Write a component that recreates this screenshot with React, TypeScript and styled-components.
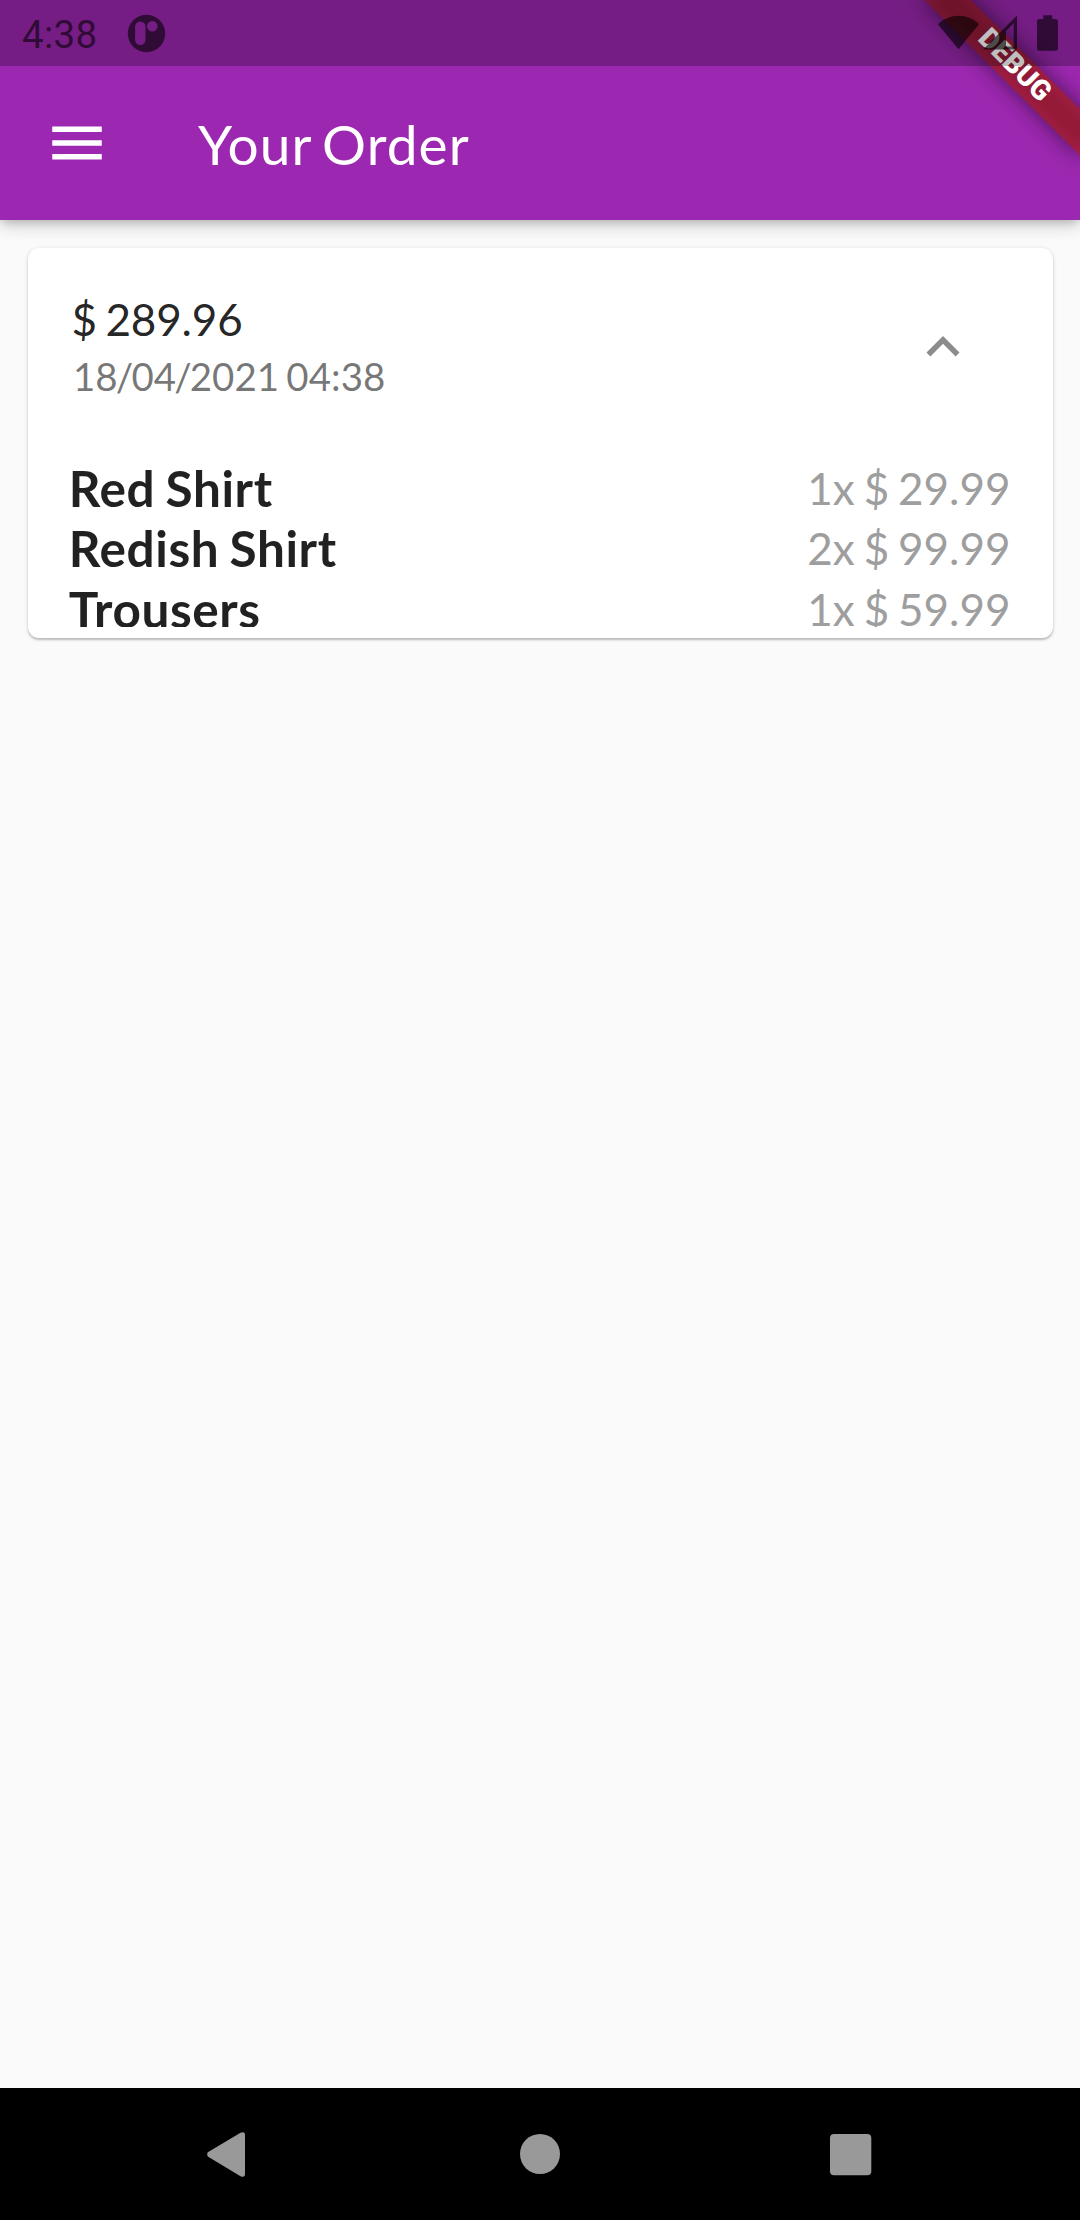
import React from 'react';
import styled, { createGlobalStyle } from 'styled-components';

const GlobalStyle = createGlobalStyle`
  html, body { margin: 0; padding: 0; background: #fafafa; }
  * { box-sizing: border-box; }
`;

const Screen = styled.div`
  position: relative;
  display: flex;
  flex-direction: column;
  width: 1080px;
  height: 2220px;
  overflow: hidden;
  background: #fafafa;
  font-family: Lato, 'Open Sans', sans-serif;
`;

const Header = styled.header`
  display: flex;
  flex-direction: column;
  height: 220px;
  flex: none;
  background: #9c27b0;
  box-shadow: 0 4px 8px -2px rgba(0, 0, 0, 0.16), 0 6px 16px rgba(0, 0, 0, 0.14), 0 1px 20px rgba(0, 0, 0, 0.06);
`;

const StatusBar = styled.div`
  position: relative;
  z-index: 2;
  display: flex;
  align-items: center;
  height: 66px;
  padding: 0 20px 0 22px;
  background: rgba(0, 0, 0, 0.25);
  color: rgba(0, 0, 0, 0.6);
`;

const Clock = styled.span`
  width: 105px;
  font: 400 38.5px/45px Roboto, sans-serif;
  letter-spacing: 0.3px;
  padding-top: 2px;
`;

const StatusIcons = styled.svg`
  margin-left: auto;
  display: block;
`;

const Toolbar = styled.div`
  display: flex;
  align-items: center;
  height: 154px;
  padding-left: 44px;
  color: #fff;
`;

const Title = styled.h1`
  margin: 2px 0 0 88px;
  font-size: 55px;
  line-height: 66px;
  font-weight: 400;
  letter-spacing: 1.1px;
  word-spacing: -4.5px;
`;

const Icon = styled.svg`
  display: block;
  width: 66px;
  height: 66px;
  fill: currentColor;
`;

const Content = styled.main`
  flex: 1;
  padding: 27.5px;
`;

const Card = styled.section`
  height: 390.5px;
  padding-bottom: 11px;
  border-radius: 11px;
  background: #fff;
  box-shadow: 0 1.5px 2px rgba(0, 0, 0, 0.2), 0 1px 5px rgba(0, 0, 0, 0.1);
`;

const Summary = styled.div`
  display: flex;
  align-items: center;
  justify-content: space-between;
  height: 198px;
  padding: 0 44px;
`;

const Labels = styled.div`
  padding-bottom: 1.5px;
`;

const Total = styled.div`
  font-size: 44px;
  line-height: 55px;
  letter-spacing: -0.15px;
  word-spacing: -2.5px;
  color: rgba(0, 0, 0, 0.87);
`;

const OrderDate = styled.div`
  margin-top: 6px;
  padding-left: 1.5px;
  font-size: 38.5px;
  line-height: 46px;
  word-spacing: -2.6px;
  color: rgba(0, 0, 0, 0.54);
`;

const Slash = styled.span`
  margin: 0 -1.85px;
`;

const Toggle = styled.button`
  display: flex;
  align-items: center;
  justify-content: center;
  width: 132px;
  height: 132px;
  padding: 0;
  border: 0;
  background: none;
  color: #8c8c8c;
`;

const Items = styled.ul`
  height: 170.5px;
  margin: 11px 42px 0 41.25px;
  padding: 1px 0 0;
  list-style: none;
  overflow: hidden;
`;

const Item = styled.li`
  display: flex;
  justify-content: space-between;
  height: 60.5px;
  line-height: 60.5px;
`;

const Name = styled.span`
  font-size: 49.5px;
  font-weight: 700;
  letter-spacing: 0.6px;
  word-spacing: -2.4px;
  color: rgba(0, 0, 0, 0.87);
`;

const Price = styled.span`
  font-size: 44px;
  word-spacing: -2.4px;
  color: #9e9e9e;
`;

const NavBar = styled.nav`
  display: flex;
  align-items: center;
  justify-content: center;
  gap: 222px;
  height: 132px;
  flex: none;
  background: #000;
`;

const NavIcon = styled.svg`
  display: block;
  width: 88px;
  height: 88px;
  fill: #999;
`;

const Corner = styled.div`
  position: absolute;
  top: 0;
  right: 0;
  z-index: 1;
  width: 0;
  height: 0;
  transform: rotate(45deg);
`;

const RibbonShadow = styled.div`
  position: absolute;
  left: -110px;
  top: 77px;
  width: 220px;
  height: 33px;
  background: rgba(0, 0, 0, 0.5);
  filter: blur(11px);
`;

const Ribbon = styled.div`
  position: absolute;
  left: -110px;
  top: 77px;
  width: 220px;
  height: 33px;
  background: rgba(183, 28, 28, 0.627);
  color: #fff;
  text-align: center;
  font: 900 28.05px/30px Roboto, sans-serif;
`;

const items = [
  { name: 'Red Shirt', price: '1x $ 29.99' },
  { name: 'Redish Shirt', price: '2x $ 99.99' },
  { name: 'Trousers', price: '1x $ 59.99' },
];

export default function App() {
  return (
    <>
      <GlobalStyle />
      <Screen>
        <Header>
          <StatusBar>
            <Clock>4:38</Clock>
            <svg width="39" height="39" viewBox="0 0 39 39">
              <path
                fill="currentColor"
                fillRule="evenodd"
                d="M19.5 .8a18.7 18.7 0 1 0 0 37.4a18.7 18.7 0 1 0 0-37.4zM8.100 12.700a5.200 5.200 0 0 1 10.400 0v13.200a5.200 5.200 0 0 1-10.400 0zM25.300 7.100a5.200 5.200 0 1 1 0 10.400a5.200 5.200 0 1 1 0-10.400z"
              />
            </svg>
            <StatusIcons width="124" height="66" viewBox="936 0 124 66" fill="currentColor">
              <path d="M938 24.2C949 12.8 968 12.8 979 24.2L958.5 49.3z" />
              <path fillRule="evenodd" d="M983 49.5L1017 15.5V49.5zM1006 31V46.500H1013.700V23.300z" />
              <path d="M1043.300 15.300h9v3.700h3.200q2.500 0 2.500 2.500v26.700q0 2.500-2.500 2.500h-16q-2.500 0-2.500-2.500v-26.700q0-2.500 2.500-2.500h3.800z" />
            </StatusIcons>
          </StatusBar>
          <Toolbar>
            <Icon viewBox="0 0 24 24">
              <path d="M3 18h18v-2H3v2zm0-5h18v-2H3v2zm0-7v2h18V6H3z" />
            </Icon>
            <Title>Your Order</Title>
          </Toolbar>
        </Header>
        <Content>
          <Card>
            <Summary>
              <Labels>
                <Total>$ 289.96</Total>
                <OrderDate>
                  18<Slash>/</Slash>04<Slash>/</Slash>2021 04:38
                </OrderDate>
              </Labels>
              <Toggle aria-label="Collapse">
                <Icon viewBox="0 0 24 24">
                  <path d="M12 8l-6 6 1.410 1.410L12 10.830l4.590 4.580L18 14z" />
                </Icon>
              </Toggle>
            </Summary>
            <Items>
              {items.map((item) => (
                <Item key={item.name}>
                  <Name>{item.name}</Name>
                  <Price>{item.price}</Price>
                </Item>
              ))}
            </Items>
          </Card>
        </Content>
        <NavBar>
          <NavIcon viewBox="0 0 88 88">
            <path d="M21.8 42.200L54.500 22.800Q59 21 59 25V64Q59 68 54.500 66.200L21.800 46.600Q20 44.400 21.800 42.200z" />
          </NavIcon>
          <NavIcon viewBox="0 0 88 88">
            <circle cx="44" cy="44" r="20" />
          </NavIcon>
          <NavIcon viewBox="0 0 88 88">
            <rect x="24" y="24" width="41.300" height="41.300" rx="4" />
          </NavIcon>
        </NavBar>
        <Corner>
          <RibbonShadow />
          <Ribbon>DEBUG</Ribbon>
        </Corner>
      </Screen>
    </>
  );
}
